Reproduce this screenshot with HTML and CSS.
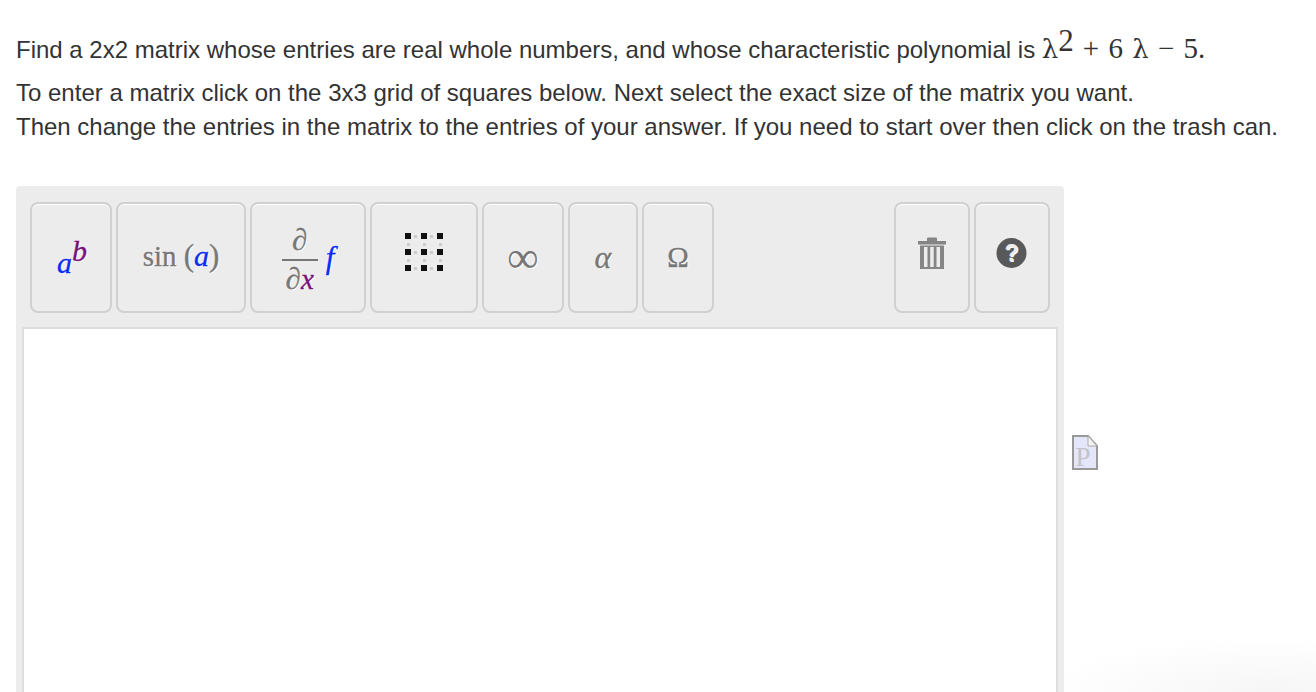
FILE: index.html
```html
<!DOCTYPE html>
<html>
<head>
	<meta charset='utf-8'>
	<title>Matrix question</title>
	<link rel="stylesheet" href="styles.css">
</head>

<body>
	<div id="question">
		<p class="first">Find a 2x2 matrix whose entries are real whole numbers, and whose characteristic polynomial is <span class="math"><span class="lam">λ</span><sup>2</sup><span class="rest">+ 6 <span class="lam">λ</span> − 5.</span></span></p>
		<p class="help">To enter a matrix click on the 3x3 grid of squares below. Next select the exact size of the matrix you want.<br>Then change the entries in the matrix to the entries of your answer. If you need to start over then click on the trash can.</p>
	</div>
	<div id="answer">
		<div class="panel">
			<div class="toolbar">
				<button class="btn w-pow"><span class="pow"><i class="blue">a</i><sup class="purple">b</sup></span></button>
				<button class="btn w-sin"><span class="sin">sin <span class="paren">(</span><i class="blue">a</i><span class="paren">)</span></span></button>
				<button class="btn w-der">
					<span class="frac"><span class="num">∂</span><span class="den">∂<i class="purple">x</i></span></span>
					<i class="blue eff">f</i>
				</button>
				<button class="btn w-mat">
					<svg class="grid" width="40" height="40" viewBox="2 3 40 40">
						<g fill="#ccc">
							<rect x="12" y="6" width="3" height="3"/><rect x="28" y="6" width="3" height="3"/>
							<rect x="12" y="22" width="3" height="3"/><rect x="28" y="22" width="3" height="3"/>
							<rect x="12" y="38" width="3" height="3"/><rect x="28" y="38" width="3" height="3"/>
							<rect x="5" y="14" width="3" height="3"/><rect x="21" y="14" width="3" height="3"/><rect x="37" y="14" width="3" height="3"/>
							<rect x="5" y="30" width="3" height="3"/><rect x="21" y="30" width="3" height="3"/><rect x="37" y="30" width="3" height="3"/>
						</g>
						<g fill="#111">
							<rect x="3" y="4" width="6" height="6"/><rect x="19" y="4" width="6" height="6"/><rect x="35" y="4" width="6" height="6"/>
							<rect x="3" y="20" width="6" height="6"/><rect x="19" y="20" width="6" height="6"/><rect x="35" y="20" width="6" height="6"/>
							<rect x="3" y="36" width="6" height="6"/><rect x="19" y="36" width="6" height="6"/><rect x="35" y="36" width="6" height="6"/>
						</g>
					</svg>
				</button>
				<button class="btn w-inf"><span class="sym inf">∞</span></button>
				<button class="btn w-alp"><span class="sym"><i>α</i></span></button>
				<button class="btn w-ome"><span class="sym">Ω</span></button>
				<div class="right">
					<button class="btn w-tra">
						<svg class="trash" width="30" height="33" viewBox="0 0 30 33">
							<path fill="#858585" d="M1 4h9V1.500q0-1 1-1h8q1 0 1 1V4h9v3.500H1zM3 8.500h24V32H3z"/>
							<path fill="#ececec" d="M7 10h3.500v20H7zM13.200 10h3.500v20h-3.500zM19.500 10H23v20h-3.500z"/>
						</svg>
					</button>
					<button class="btn w-hlp">
						<svg class="qhelp" width="32" height="32" viewBox="0 0 32 32">
							<circle cx="15.500" cy="16" r="15" fill="#58595b"/>
							<text x="15.500" y="24" text-anchor="middle" class="qmark">?</text>
						</svg>
					</button>
				</div>
			</div>
			<div class="editor"></div>
		</div>
		<svg class="page" width="28" height="42" viewBox="0 0 28 42">
			<path fill="#e6e6fa" stroke="#999" stroke-width="2" d="M2 2h15l9 10v23H2z"/>
			<path fill="#f4f4f4" stroke="#aaa" d="M17 2v10h9z"/>
			<text x="12" y="32" text-anchor="middle" class="pmark">P</text>
		</svg>
	</div>
</body>
</html>
```

FILE: styles.css
```css
html, body {height: 100%; margin: 0; overflow: hidden;}
body {display: flex; flex-direction: column; font-family: "Liberation Sans", Arial, sans-serif; font-size: 24px; color: #333; background: radial-gradient(ellipse 230px 55px at 1270px 692px, #f6f6f6, #fff);}
p {margin: 0;}

div#question {padding: 25px 0 0 16px; white-space: nowrap;}
p.first {line-height: 50px; height: 50px;}
p.help {line-height: 34px; margin-top: 1px;}

span.math {font-family: "Liberation Serif", serif; font-size: 29px; line-height: 0;}
span.math sup {font-size: 31px; line-height: 0; vertical-align: 7px;}
span.lam {font-family: "DejaVu Serif", serif; font-size: 26px; line-height: 0;}
span.rest {margin-left: 9px; word-spacing: 2px;}

div#answer {display: flex; flex: 1; min-height: 0; margin: 42px 0 0 16px;}
div.panel {display: flex; flex-direction: column; width: 1048px; flex: none; background: #ececec; border-radius: 4px 4px 0 0; padding: 16px 6px 0 6px; box-sizing: border-box;}
div.toolbar {display: flex; gap: 4px; padding: 0 8px;}
div.right {display: flex; gap: 4px; margin-left: auto;}

button.btn {height: 111px; padding: 0; display: flex; align-items: center; justify-content: center; background: #ececec; border: 2px solid #d0d0d0; border-radius: 8px; box-shadow: inset 0 1px 0 #fff; font-family: "Liberation Serif", serif; color: #777; text-shadow: 1px 1px 0 #fff; -webkit-text-stroke: 0.3px currentColor;}
.w-pow {width: 82px;}
.w-sin {width: 130px;}
.w-der {width: 116px;}
.w-mat {width: 108px;}
.w-inf {width: 82px;}
.w-alp {width: 70px;}
.w-ome {width: 72px;}
.w-tra {width: 76px;}
.w-hlp {width: 76px;}

.blue {color: #0a2cf5;}
.purple {color: #77127b;}

span.pow {font-size: 30px; margin-top: 10px; margin-left: 2px; font-style: italic;}
span.pow sup {line-height: 0; font-size: 30px; vertical-align: 12px;}
span.sin {font-size: 29px; margin-top: -3px;}
span.sin i {font-size: 30px;}
span.paren {font-size: 31px;}

span.frac {display: inline-flex; flex-direction: column; align-items: center; margin-top: 3px; font-size: 31px; line-height: 30px;}
span.num {border-bottom: 2px solid #777; width: 36px; text-align: center; padding-bottom: 4px;}
span.den {padding-top: 3px;}
span.den i {font-size: 29px;}
i.eff {font-size: 31px; margin-left: 8px;}

span.sym {font-size: 29px;}
span.sym i {font-size: 32px;}
span.inf {font-size: 44px; line-height: 30px; -webkit-text-stroke: 0;}

svg.grid {margin-top: -11px;}
svg.trash {margin-top: -9px;}
svg.qhelp {margin-top: -9px;}
svg .qmark {font-family: "Liberation Sans", sans-serif; font-weight: bold; font-size: 23px; fill: #ececec; stroke: none;}
svg .pmark {font-family: "Liberation Serif", serif; font-size: 27px; fill: #c4c4c4;}

div.editor {flex: 1; margin-top: 14px; background: #fff; border: 2px solid #dedede; border-bottom: 0;}
svg.page {flex: none; margin: 248px 0 0 7px;}
```
